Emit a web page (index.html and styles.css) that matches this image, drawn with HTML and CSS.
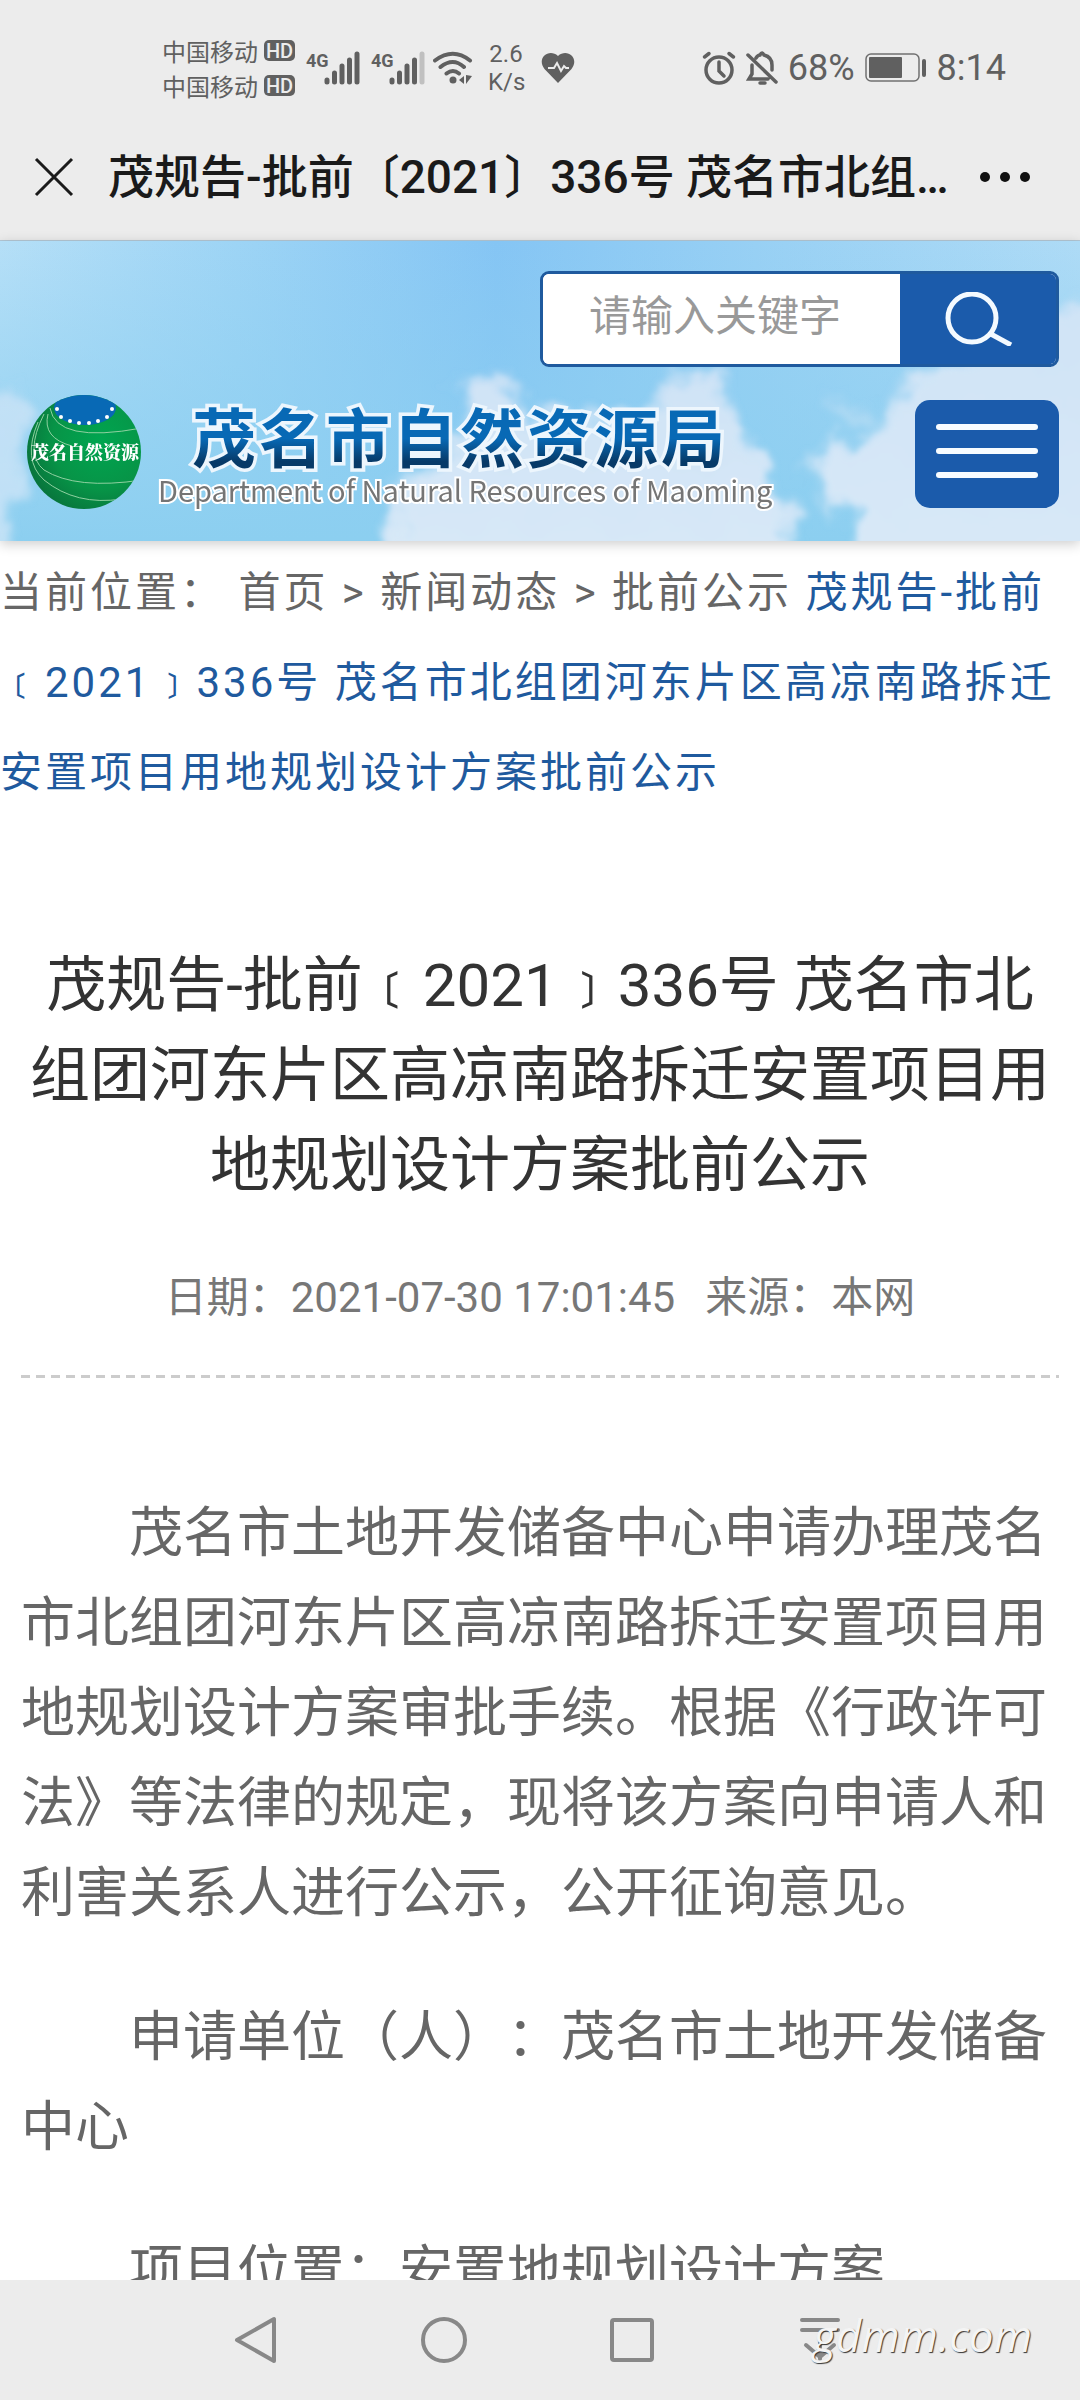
FILE: index.html
```html
<!DOCTYPE html>
<html lang="zh-CN">
<head>
<meta charset="utf-8">
<meta name="viewport" content="width=device-width, initial-scale=1">
<title>茂名市自然资源局</title>
<link rel="stylesheet" href="styles.css">
</head>
<body>
<div class="screen">
  <header class="status">
    <div class="carriers">
      <div class="carrier">中国移动<span class="hd">HD</span></div>
      <div class="carrier">中国移动<span class="hd">HD</span></div>
    </div>
    <svg class="signal" width="54" height="34" viewBox="0 0 54 34" role="img" aria-label="4G">
      <text class="net" x="0" y="16">4G</text>
      <g stroke="#606060" stroke-width="5" stroke-linecap="round"><path d="M21 29v2M28.500 22v9M36 15v16M43.500 9v22M51 3v28"/></g>
    </svg>
    <svg class="signal" width="54" height="34" viewBox="0 0 54 34" role="img" aria-label="4G">
      <text class="net" x="0" y="16">4G</text>
      <g stroke="#606060" stroke-width="5" stroke-linecap="round"><path d="M21 29v2M28.500 22v9M36 15v16M43.500 9v22"/><path stroke="#c0c0c0" d="M51 3v28"/></g>
    </svg>
    <svg class="wifi" width="40" height="34" viewBox="0 0 40 34" aria-hidden="true">
      <g fill="none" stroke="#606060" stroke-width="4" stroke-linecap="round"><path d="M2 9.500Q20-4 37 9.500M7.500 16Q20 6 31 16M13.500 22.500Q20 17.500 26 22.500"/></g>
      <circle cx="20" cy="29" r="3.500" fill="#606060"/><path d="M26 29l5-4v8zM33 24v9l6-8z" fill="#606060"/>
    </svg>
    <div class="speed">2.6<br>K/s</div>
    <svg class="heart" width="34" height="32" viewBox="0 0 34 32" aria-hidden="true">
      <path d="M17 31L3.500 17C-5 6 8-4 17 4C26-4 39 6 30.500 17z" fill="#606060"/>
      <path d="M7 16h6l3-5 4 8 3-5 2 2h3" fill="none" stroke="#ececec" stroke-width="2"/>
    </svg>
    <div class="status-right">
      <svg width="34" height="34" viewBox="0 0 34 34" fill="none" stroke="#606060" stroke-width="3.500" stroke-linecap="round" aria-hidden="true"><circle cx="17" cy="19" r="13"/><path d="M17 11v9l5 5M2.500 6L7 2.500M31.500 6L27 2.500"/></svg>
      <svg width="32" height="34" viewBox="0 0 32 34" fill="none" stroke="#606060" stroke-width="3.500" stroke-linecap="round" aria-hidden="true"><path d="M2 4l28 27M6 14v9l-3 5h19M10 7q2-3 4-3q2-4 4 0q8 2 8 10v5"/><path d="M14 32h5"/></svg>
      <span class="num">68%</span>
      <svg width="62" height="30" viewBox="0 0 62 30" aria-hidden="true"><rect x="1" y="1" width="53" height="27" rx="5" fill="none" stroke="#707070" stroke-width="1.500"/><rect x="4" y="4" width="33" height="21" rx="1" fill="#606060"/><rect x="57" y="6" width="4" height="18" rx="2" fill="#606060"/></svg>
      <span class="num">8:14</span>
    </div>
  </header>

  <div class="titlebar">
    <button class="plain" type="button" aria-label="关闭"><svg width="40" height="40" viewBox="0 0 40 40" stroke="#1a1a1a" stroke-width="3" aria-hidden="true"><path d="M2 2l36 36M38 2L2 38"/></svg></button>
    <div class="title">茂规告-批前〔2021〕336号 茂名市北组…</div>
    <button class="plain" type="button" aria-label="更多"><svg width="52" height="12" viewBox="0 0 52 12" fill="#111" aria-hidden="true"><circle cx="6" cy="6" r="5"/><circle cx="26" cy="6" r="5"/><circle cx="46" cy="6" r="5"/></svg></button>
  </div>

  <section class="banner">
    <svg class="sky" viewBox="0 0 1080 301" preserveAspectRatio="none" aria-hidden="true">
      <defs>
        <linearGradient id="skyfill" x1="0" y1="0" x2="1" y2="0"><stop offset="0" stop-color="#b5dff7"/><stop offset=".22" stop-color="#9dd4f5"/><stop offset=".46" stop-color="#85c5f4"/><stop offset=".7" stop-color="#98d0f4"/><stop offset="1" stop-color="#aedbf6"/></linearGradient>
        <linearGradient id="low" x1="0" y1="0" x2="0" y2="1"><stop offset="0" stop-color="#8ccff0" stop-opacity="0"/><stop offset="1" stop-color="#8ccff0"/></linearGradient>
        <linearGradient id="cloud" x1="0" y1="0" x2="0" y2="1"><stop offset="0" stop-color="#cfe3f6"/><stop offset="1" stop-color="#d9e9f8"/></linearGradient>
        <filter id="soft" x="-20%" y="-20%" width="140%" height="140%">
          <feTurbulence type="fractalNoise" baseFrequency=".025" numOctaves="4" seed="4" result="n"/>
          <feGaussianBlur in="SourceGraphic" stdDeviation="6"/>
          <feDisplacementMap in2="n" scale="50" xChannelSelector="R" yChannelSelector="G"/>
          <feGaussianBlur stdDeviation="2"/>
        </filter>
      </defs>
      <rect width="1080" height="301" fill="url(#skyfill)"/><rect width="1080" height="301" fill="url(#low)"/>
      <g filter="url(#soft)" fill="url(#cloud)">
        <path d="M-40 140L10 150 22 190 15 270-10 330H-40z" opacity=".7"/>
        <path d="M370 340L400 240 450 210 465 140 505 135 525 180 575 165 610 190 655 175 665 140 715 130 740 190 770 230 795 270 808 340z"/>
        <path d="M850 340L860 280 815 250 812 215 890 180 915 140 1000 110 1050 70 1120 40V340z"/>
        <path d="M820 165L860 160 880 180 840 180z" opacity=".4"/>
      </g>
    </svg>
    <form class="search">
      <input class="search-input" type="text" placeholder="请输入关键字" aria-label="请输入关键字">
      <button class="search-btn" type="button" aria-label="搜索"><svg width="68" height="54" viewBox="0 0 68 54" fill="none" stroke="#f4faff" stroke-width="5" aria-hidden="true"><ellipse cx="27" cy="26" rx="24" ry="24"/><path d="M44 41l22 12"/></svg></button>
    </form>
    <div class="brand">
      <svg class="logo" width="116" height="116" viewBox="0 0 116 116" role="img" aria-label="茂名自然资源">
        <defs><radialGradient id="globe" cx=".65" cy=".4" r=".7"><stop offset="0" stop-color="#00a550"/><stop offset=".6" stop-color="#079447"/><stop offset="1" stop-color="#08713b"/></radialGradient><clipPath id="ball"><circle cx="58" cy="58" r="57"/></clipPath></defs>
        <g clip-path="url(#ball)">
          <rect width="116" height="116" fill="url(#globe)"/>
          <g fill="none" stroke="#8fd0a0" stroke-width="1"><path d="M24 14Q30 50 116 34M18 20Q-2 60 18 76Q50 96 116 86M12 28Q-4 66 18 86Q50 112 96 105M22 20Q16 44 46 52"/></g>
          <ellipse cx="59" cy="14" rx="31" ry="17" fill="#0869b5"/>
          <g fill="#fff"><circle cx="31" cy="15" r="2"/><circle cx="35" cy="23" r="2"/><circle cx="44" cy="27" r="2"/><circle cx="53" cy="29" r="2"/><circle cx="63" cy="29" r="2"/><circle cx="72" cy="27" r="2"/><circle cx="81" cy="23" r="2"/><circle cx="86" cy="15" r="2"/></g>
        </g>
        <text class="logo-text" x="59" y="65" text-anchor="middle">茂名自然资源</text>
      </svg>
      <div class="names">
        <div class="name" data-text="茂名市自然资源局"><span>茂名市自然资源局</span></div>
        <div class="name-en">Department of Natural Resources of Maoming</div>
      </div>
      <button class="menu" type="button" aria-label="菜单"><i></i><i></i><i></i></button>
    </div>
  </section>

  <main>
    <nav class="crumbs">当前位置： <a href="#">首页</a> &gt; <a href="#">新闻动态</a> &gt; <a href="#">批前公示</a> <a class="here" href="#">茂规告-批前﹝2021﹞336号 茂名市北组团河东片区高凉南路拆迁安置项目用地规划设计方案批前公示</a></nav>
    <article>
      <h1>茂规告-批前﹝2021﹞336号 茂名市北组团河东片区高凉南路拆迁安置项目用地规划设计方案批前公示</h1>
      <div class="meta"><span>日期：2021-07-30 17:01:45</span><span>来源：本网</span></div>
      <div class="text">
        <p>茂名市土地开发储备中心申请办理茂名市北组团河东片区高凉南路拆迁安置项目用地规划设计方案审批手续。根据《行政许可法》等法律的规定，现将该方案向申请人和利害关系人进行公示，公开征询意见。</p>
        <p>申请单位（人）：茂名市土地开发储备中心</p>
        <p>项目位置：安置地规划设计方案</p>
      </div>
    </article>
  </main>

  <footer class="navbar">
    <button class="plain" type="button" aria-label="返回"><svg width="48" height="48" viewBox="0 0 48 48" aria-hidden="true"><path d="M42 3v42L5 24z"/></svg></button>
    <button class="plain" type="button" aria-label="主页"><svg width="48" height="48" viewBox="0 0 48 48" aria-hidden="true"><circle cx="24" cy="24" r="21"/></svg></button>
    <button class="plain" type="button" aria-label="最近任务"><svg width="48" height="48" viewBox="0 0 48 48" aria-hidden="true"><rect x="4" y="4" width="40" height="40" rx="2"/></svg></button>
    <button class="plain" type="button" aria-label="下拉"><svg width="48" height="48" viewBox="0 0 48 48" aria-hidden="true"><path d="M6 4h36M6 14h36M24 25v18M10 29l14 12 14-12"/></svg></button>
    <span class="mark">gdmm.com</span>
  </footer>
</div>
</body>
</html>
```
FILE: styles.css
```css
* { box-sizing: border-box; }
body {
  margin: 0;
  background: #fff;
  font-family: Roboto, "Noto Sans CJK SC", sans-serif;
  color: #666;
  text-spacing-trim: space-all;
}
a { color: inherit; text-decoration: none; }
button { font: inherit; border: 0; margin: 0; padding: 0; cursor: pointer; }
svg { display: block; flex: none; }
.plain { display: flex; background: none; }
.screen { display: flex; flex-direction: column; height: 100vh; overflow: hidden; }

.status {
  flex: none;
  display: flex;
  align-items: center;
  height: 120px;
  padding: 16px 74px 0 162px;
  background: #ececec;
  color: #606060;
}
.carrier { display: flex; align-items: center; gap: 6px; height: 35px; font-size: 24px; white-space: nowrap; }
.hd {
  width: 31px;
  height: 21px;
  border-radius: 5px;
  background: #606060;
  color: #ececec;
  font-size: 20px;
  font-weight: 500;
  line-height: 22px;
  text-align: center;
}
.signal { margin-left: 11px; overflow: visible; }
.net { font: 700 18px Roboto, sans-serif; fill: #606060; }
.wifi { margin-left: 8px; }
.speed { width: 36px; margin-left: 15px; font-size: 24px; line-height: 28px; text-align: center; }
.heart { margin-left: 17px; }
.status-right { display: flex; align-items: center; gap: 10px; margin-left: auto; }
.num { font-size: 36px; line-height: 40px; }

.titlebar {
  flex: none;
  display: flex;
  align-items: center;
  height: 121px;
  padding: 0 49px 6px 34px;
  border-bottom: 1px solid #b4c8d6;
  background: #ececec;
}
.title {
  flex: 1;
  margin-left: 34px;
  overflow: hidden;
  color: #1a1a1a;
  font-size: 46px;
  font-weight: 500;
  line-height: 64px;
  white-space: nowrap;
}

.banner {
  position: relative;
  flex: none;
  height: 300px;
  padding: 30px 21px 0 26px;
  box-shadow: 0 3px 12px rgba(0, 0, 0, .2);
}
.sky { position: absolute; inset: 0; width: 100%; height: 100%; }
.search {
  position: relative;
  display: flex;
  width: 519px;
  height: 96px;
  margin-left: auto;
  border: 3px solid #1f5a9e;
  border-radius: 9px;
  background: #fff;
  overflow: hidden;
}
.search-input {
  flex: 1;
  min-width: 0;
  padding: 0 0 6px 46px;
  border: 0;
  background: #fff;
  font: 42px Roboto, "Noto Sans CJK SC", sans-serif;
  outline: 0;
}
.search-input::placeholder { color: #999; opacity: 1; }
.search-btn { display: flex; align-items: center; width: 156px; padding-left: 45px; background: #1b5bab; }
.brand { position: relative; display: flex; margin-top: 27px; }
.logo-text { font: 900 18px "Noto Serif CJK SC", "Noto Sans CJK SC", serif; fill: #fff; }
.names { margin-left: 16px; }
.name {
  position: relative;
  padding-left: 34px;
  font: 700 64px/80px "Noto Sans CJK SC", sans-serif;
  letter-spacing: 3px;
  white-space: nowrap;
}
.name::before {
  content: attr(data-text);
  position: absolute;
  -webkit-text-stroke: 7px #edf6fd;
}
.name span {
  position: relative;
  background: linear-gradient(#0869b5 55%, #073a68 80%);
  -webkit-background-clip: text;
  background-clip: text;
  color: transparent;
}
.name-en {
  font: 29px/30px "Noto Sans CJK SC", sans-serif;
  color: #757575;
  white-space: nowrap;
  -webkit-text-stroke: 4px #fff;
  paint-order: stroke fill;
}
.menu {
  display: flex;
  flex-direction: column;
  justify-content: center;
  gap: 18px;
  width: 144px;
  height: 108px;
  margin: 6px 0 0 auto;
  padding: 0 21px 6px;
  border-radius: 15px;
  background: #1b5bab;
}
.menu i { height: 6px; border-radius: 3px; background: #f8fcff; }

main { flex: 1; min-height: 0; overflow: hidden; }
.crumbs { padding-top: 7px; font-size: 42px; line-height: 90px; letter-spacing: 3px; }
.here { color: #1f5a9e; }
article { padding: 123px 21px 0; }
h1 { margin: 0; color: #333; font-size: 60px; font-weight: 400; line-height: 90px; text-align: center; }
.meta {
  display: flex;
  justify-content: center;
  gap: 30px;
  height: 167px;
  padding-top: 57px;
  background: repeating-linear-gradient(90deg, #ccc 0 9px, transparent 9px 15px) bottom / 100% 3px no-repeat;
  color: #777;
  font-size: 42px;
  line-height: 60px;
}
.text { padding-top: 111px; font-size: 54px; line-height: 90px; }
p { margin: 0 0 54px; text-indent: 2em; }

.navbar {
  position: relative;
  flex: none;
  display: flex;
  align-items: center;
  gap: 140px;
  height: 120px;
  padding-left: 232px;
  background: #ececec;
}
.navbar svg { fill: none; stroke: #888; stroke-width: 4; stroke-linecap: round; stroke-linejoin: round; }
.mark {
  position: absolute;
  right: 48px;
  bottom: 40px;
  color: #f4f4f4;
  font: italic 44px/50px "Open Sans", sans-serif;
  text-shadow: 1px 1px 1px #333;
}
```
